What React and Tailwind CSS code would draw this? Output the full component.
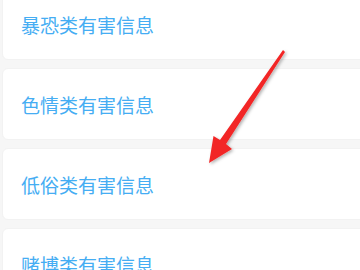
import React from "react";

const items = ["暴恐类有害信息", "色情类有害信息", "低俗类有害信息", "赌博类有害信息"];

function Arrow() {
  return (
    <svg
      className="absolute left-0 top-0 pointer-events-none"
      width="360"
      height="270"
      viewBox="0 0 360 270"
    >
      <defs>
        <filter id="sh" x="-20%" y="-20%" width="140%" height="140%">
          <feDropShadow dx="1.5" dy="1.5" stdDeviation="1.5" floodColor="#000" floodOpacity="0.3" />
        </filter>
      </defs>
      <polygon
        points="283,50 285,52 226,144 232,149 209,163 213.5,136 220,140"
        fill="#f22626"
        filter="url(#sh)"
      />
    </svg>
  );
}

export default function App() {
  return (
    <div className="relative w-[360px] h-[270px] overflow-hidden bg-[#f6f6f6]">
      <div className="flex flex-col gap-2 -mt-3 pl-[2px] -mr-3">
        {items.map((t) => (
          <div
            key={t}
            className="h-[72px] flex items-center bg-white rounded-md border border-[#f2f2f2] pl-[18px]"
          >
            <span
              className="text-[19px] leading-none text-[#45adf3]"
              style={{ fontFamily: '"Noto Sans CJK SC", "Noto Sans", sans-serif' }}
            >
              {t}
            </span>
          </div>
        ))}
      </div>
      <Arrow />
    </div>
  );
}
